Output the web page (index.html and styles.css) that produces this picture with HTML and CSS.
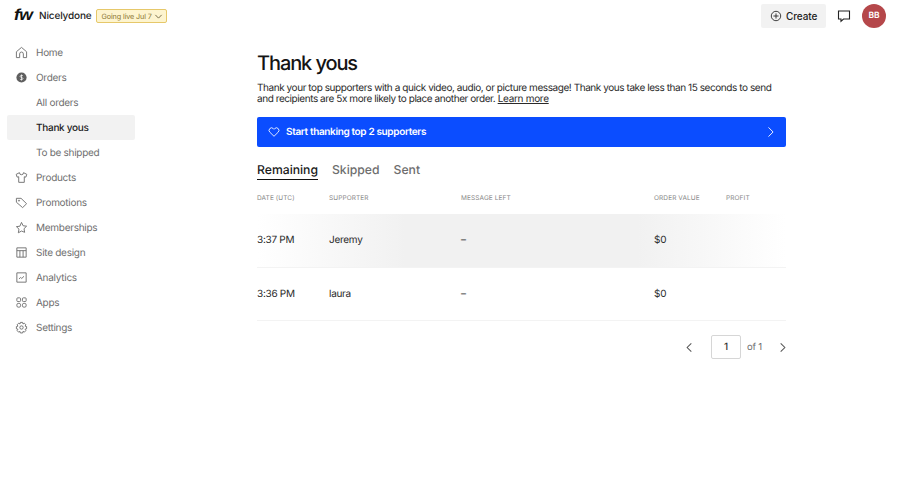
FILE: index.html
```html
<!DOCTYPE html>
<html lang="en">
<head>
<meta charset="utf-8">
<title>Thank yous</title>
<link rel="stylesheet" href="styles.css">
</head>
<body>
<header class="topbar">
  <div class="brand">
    <span class="logo">fw</span>
    <span class="shop">Nicelydone</span>
    <span class="live">Going live Jul 7
      <svg class="live-chev" viewBox="0 0 10 10"><path d="M1.500 3.200 5 6.800l3.500-3.600"/></svg>
    </span>
  </div>
  <div class="actions">
    <button class="create">
      <svg class="ico12" viewBox="0 0 14 14"><circle cx="7" cy="7" r="5.500"/><path d="M7 4v6M4 7h6"/></svg>
      Create
    </button>
    <svg class="chat" viewBox="0 0 14 14"><path d="M1.500 2h11v8H6.500L4 12.300V10H1.500z"/></svg>
    <span class="avatar">BB</span>
  </div>
</header>
<div class="layout">
  <nav class="sidebar">
    <a class="nav"><svg class="ico" viewBox="0 0 14 14"><path d="M1.500 6.200 7 1.500l5.500 4.700v6.300H9V8.500a2 2 0 0 0-4 0v4H1.500z"/></svg>Home</a>
    <a class="nav"><svg class="ico" viewBox="0 0 14 14"><circle class="fill" cx="7" cy="7" r="5.500"/><path class="cut" d="M8.600 5.300C8 4.500 5.600 4.400 5.500 5.800 5.400 7.300 8.700 6.700 8.600 8.200 8.500 9.600 6 9.500 5.300 8.700M7 3.800v6.400"/></svg>Orders</a>
    <a class="nav sub">All orders</a>
    <a class="nav sub active">Thank yous</a>
    <a class="nav sub">To be shipped</a>
    <a class="nav"><svg class="ico" viewBox="0 0 14 14"><path d="M4.800 1.800 1.300 3.600l1 3 1.700-.4v6h6v-6l1.700.4 1-3-3.500-1.800a2.200 2.200 0 0 1-4.400 0z"/></svg>Products</a>
    <a class="nav"><svg class="ico" viewBox="0 0 14 14"><path d="M1.500 2.500h5l6 5.800-4.300 4.200-6.700-5.800z"/><circle cx="4.300" cy="5" r=".6"/></svg>Promotions</a>
    <a class="nav"><svg class="ico" viewBox="0 0 14 14"><path d="m7 1.500 1.700 3.600 3.800.5-2.800 2.700.7 3.900L7 10.800l-3.400 1.900.7-3.900-2.800-2.700 3.800-.5z"/></svg>Memberships</a>
    <a class="nav"><svg class="ico" viewBox="0 0 14 14"><path d="M2 2h10v10H2zM2 5h10M5.300 5v7M8.700 5v7"/></svg>Site design</a>
    <a class="nav"><svg class="ico" viewBox="0 0 14 14"><path d="M2 2h10v10H2zM4.300 8.500 6 7l1.300 1 2.400-2.300"/></svg>Analytics</a>
    <a class="nav"><svg class="ico" viewBox="0 0 14 14"><rect x="2" y="2" width="4" height="4" rx="1"/><rect x="8" y="2" width="4" height="4" rx="1"/><rect x="2" y="8" width="4" height="4" rx="1.500"/><rect x="8" y="8" width="4" height="4" rx="1.500"/></svg>Apps</a>
    <a class="nav"><svg class="ico" viewBox="0 0 14 14"><path d="M5.800 1.500h2.400l.4 1.700 1.500-.8 1.600 1.700-.9 1.400 1.700.5v2.400l-1.700.5.900 1.400-1.600 1.700-1.500-.8-.4 1.700H5.800l-.4-1.700-1.500.8-1.600-1.700.9-1.400-1.700-.5V6l1.700-.5-.9-1.400 1.600-1.700 1.500.8z"/><circle cx="7" cy="7" r="1.800"/></svg>Settings</a>
  </nav>
  <main class="main">
    <h1 class="title">Thank yous</h1>
    <p class="intro">Thank your top supporters with a quick video, audio, or picture message! Thank yous take less than 15 seconds to send and recipients are 5x more likely to place another order. <a class="learn">Learn more</a></p>
    <div class="banner">
      <svg class="heart" viewBox="0 0 14 14"><path d="M7 12 2.100 7.200a3 3 0 0 1 0-4.200 2.900 2.900 0 0 1 4.100 0l.8.800.8-.8a2.900 2.900 0 0 1 4.100 0 3 3 0 0 1 0 4.200z"/></svg>
      <span class="banner-text">Start thanking top 2 supporters</span>
      <svg class="banner-chev" viewBox="0 0 12 14"><path d="m3 1.500 5.500 5.500L3 12.500"/></svg>
    </div>
    <div class="tabs">
      <span class="tab current">Remaining</span>
      <span class="tab">Skipped</span>
      <span class="tab">Sent</span>
    </div>
    <div class="table">
      <div class="row head"><span>DATE (UTC)</span><span>SUPPORTER</span><span>MESSAGE LEFT</span><span>ORDER VALUE</span><span>PROFIT</span></div>
      <div class="row body hover"><span>3:37 PM</span><span>Jeremy</span><span>–</span><span>$0</span><span></span></div>
      <div class="row body"><span>3:36 PM</span><span>laura</span><span>–</span><span>$0</span><span></span></div>
    </div>
    <div class="pager">
      <svg class="pg-chev" viewBox="0 0 10 14"><path d="M7.500 2.500 3 7l4.500 4.500"/></svg>
      <span class="page-box">1</span>
      <span class="page-of">of 1</span>
      <svg class="pg-chev" viewBox="0 0 10 14"><path d="M2.500 2.500 7 7l-4.500 4.500"/></svg>
    </div>
  </main>
</div>
</body>
</html>
```
FILE: styles.css
```css
* { box-sizing: border-box; }
html, body { margin: 0; padding: 0; }
body {
  width: 900px;
  height: 484px;
  overflow: hidden;
  background: #fff;
  font-family: Inter, "Liberation Sans", sans-serif;
  color: #1c1c1c;
  text-rendering: geometricPrecision;
}
.topbar {
  height: 32px;
  display: flex;
  justify-content: space-between;
  align-items: center;
  padding: 0 14px;
}
.brand { display: flex; align-items: center; }
.logo {
  width: 25px;
  font: italic 700 16px/16px "Liberation Sans", sans-serif;
  letter-spacing: -0.5px;
  color: #111;
  transform: scaleX(1.100);
  transform-origin: left center;
}
.shop { font-size: 10px; font-weight: 500; letter-spacing: -0.15px; color: #222; margin-right: 4px; }
.live {
  display: flex;
  align-items: center;
  gap: 2px;
  height: 14px;
  padding: 0 3px 0 5px;
  font-size: 7.200px;
  letter-spacing: -0.1px;
  color: #8a7430;
  background: #fdf4cf;
  border: 1px solid #e6c86a;
  border-radius: 2px;
}
.live-chev { width: 9px; height: 9px; fill: none; stroke: #6d6240; stroke-width: 1; }
.actions { display: flex; align-items: center; }
.create {
  display: flex;
  align-items: center;
  gap: 4px;
  width: 65px;
  height: 24px;
  padding: 0 0 0 9px;
  border: 0;
  border-radius: 2px;
  background: #f2f2f2;
  font: 500 10px Inter, sans-serif;
  letter-spacing: -0.1px;
  color: #222;
}
.ico12 { width: 12px; height: 12px; fill: none; stroke: #222; stroke-width: 1; }
.chat { width: 14px; height: 14px; margin: 0 11px; fill: none; stroke: #222; stroke-width: 1.100; }
.avatar {
  width: 24px;
  height: 24px;
  border-radius: 50%;
  background: #b5474a;
  color: #fff;
  font-size: 8.500px;
  font-weight: 600;
  display: flex;
  align-items: center;
  justify-content: center;
}
.layout { display: flex; }
.sidebar {
  width: 257px;
  flex: none;
  padding: 8px 0 0 7px;
  display: flex;
  flex-direction: column;
}
.nav {
  width: 128px;
  height: 25px;
  display: flex;
  align-items: center;
  gap: 8px;
  padding-left: 8px;
  font-size: 10px;
  letter-spacing: -0.28px;
  color: #6f6f6f;
  border-radius: 2px;
}
.nav.sub { padding-left: 29px; }
.nav.active { background: #f2f2f2; color: #222; font-weight: 500; }
.ico { width: 13px; height: 13px; flex: none; fill: none; stroke: #6f6f6f; stroke-width: 1; }
.ico .fill { fill: #5f5f5f; stroke: none; }
.ico .cut { stroke: #fff; stroke-width: .8; }
.main { width: 529px; flex: none; }
.title {
  margin: 18px 0 0;
  font-size: 20px;
  line-height: 26px;
  font-weight: 500;
  letter-spacing: -1.100px;
  color: #141414;
}
.intro {
  margin: 7px 0 0;
  font-size: 10px;
  line-height: 11px;
  letter-spacing: -0.43px;
  color: #2a2a2a;
}
.learn { text-decoration: underline; letter-spacing: -0.3px; }
.banner {
  margin-top: 12px;
  height: 30px;
  display: flex;
  align-items: center;
  padding: 0 10px 0 11px;
  border-radius: 2px;
  background: #0b4dff;
  color: #fff;
}
.heart { width: 12px; height: 12px; fill: none; stroke: #fff; stroke-width: 1; margin-right: 6px; }
.banner-text { flex: 1; font-size: 10px; font-weight: 600; letter-spacing: -0.35px; }
.banner-chev { width: 10px; height: 12px; fill: none; stroke: #fff; stroke-width: 1.100; }
.tabs { display: flex; gap: 14px; margin-top: 15px; }
.tab {
  height: 18px;
  font-size: 12.200px;
  line-height: 16px;
  font-weight: 500;
  color: #6e6e6e;
}
.tab.current { color: #1a1a1a; border-bottom: 1px solid #111; }
.table { margin-top: 2px; }
.row {
  display: grid;
  grid-template-columns: 72px 132px 193px 72px 1fr;
  align-items: center;
}
.row.head {
  height: 32px;
  font-size: 6.500px;
  letter-spacing: .1px;
  color: #888;
}
.row.body {
  height: 53.500px;
  font-size: 10px;
  letter-spacing: -0.28px;
  color: #2a2a2a;
  border-bottom: 1px solid #f3f3f3;
}
.row.hover {
  background: linear-gradient(90deg, #fff 0%, #f1f1f1 28%, #f1f1f1 72%, #fff 100%);
}
.pager {
  display: flex;
  align-items: center;
  justify-content: flex-end;
  margin: 13px -2px 0 0;
  height: 26px;
}
.pg-chev { width: 10px; height: 13px; fill: none; stroke: #555; stroke-width: 1.100; }
.page-box {
  width: 30px;
  height: 24px;
  margin: 0 6px 0 17px;
  border: 1px solid #d6d6d6;
  border-radius: 2px;
  font-size: 10px;
  font-weight: 500;
  color: #333;
  display: flex;
  align-items: center;
  justify-content: center;
}
.page-of { font-size: 9.500px; letter-spacing: -0.2px; color: #6f6f6f; margin-right: 16px; }
```
